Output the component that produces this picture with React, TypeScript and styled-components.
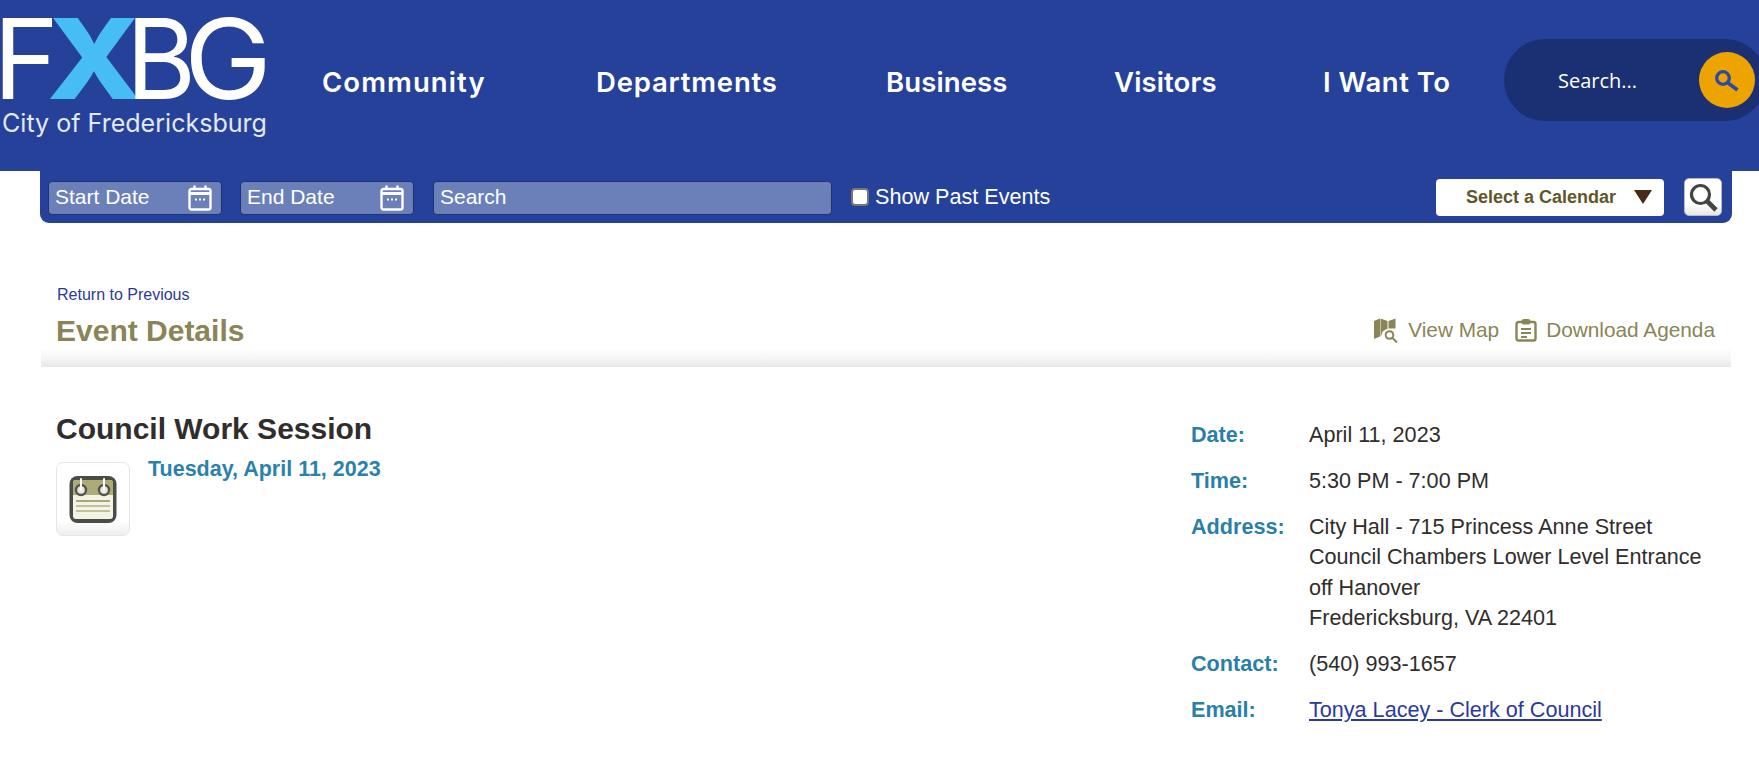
import React from "react";
import styled, { createGlobalStyle } from "styled-components";

const Global = createGlobalStyle`
  html, body { margin: 0; padding: 0; background: #fff; }
  body { font-family: "Liberation Sans", Arial, sans-serif; overflow: hidden; }
`;
const Page = styled.div`width: 1759px; height: 765px; overflow: hidden; background: #fff;`;
const Header = styled.header`
  height: 171px; background: #25419a; display: flex; align-items: flex-start; position: relative;
`;
const LogoWrap = styled.a`display: block; width: 270px; height: 140px; margin-top: 14px; flex: none;`;
const Nav = styled.nav`
  display: flex; align-items: center; height: 82px; margin-top: 41px; margin-left: 52px; width: 1129px;
`;
const NavItem = styled.a<{ $w: number; $ls: number }>`
  width: ${p => p.$w}px; flex: none; color: #fff; font-family: Inter, "Open Sans", sans-serif;
  font-weight: 600; font-size: 27.5px; letter-spacing: ${p => p.$ls}px; white-space: nowrap;
`;
const SearchPill = styled.div`
  position: absolute; left: 1504px; top: 39px; width: 262px; height: 82px; border-radius: 41px;
  background: #1b3072; display: flex; align-items: center;
`;
const PillText = styled.span`
  margin-left: 54px; color: #fff; font: 400 20px "Open Sans", sans-serif; width: 141px;
`;
const PillButton = styled.span`
  width: 56px; height: 56px; border-radius: 50%; background: #eea400; display: flex; align-items: center; justify-content: center;
`;
const FilterBar = styled.div`
  margin: 0 27px 0 40px; height: 52px; background: #25419a; border-radius: 0 0 9px 9px;
  display: flex; align-items: center; padding: 0 10px 0 8px; box-sizing: border-box;
`;
const Field = styled.div<{ $w: number; $gap: number }>`
  width: ${p => p.$w}px; margin-right: ${p => p.$gap}px; height: 34px; box-sizing: border-box;
  background: #6b7fb9; border: 1px solid #1d3378; border-radius: 4px; color: #fff; font-size: 21px;
  display: flex; align-items: center; justify-content: space-between; padding: 0 9px 2px 6px; margin-top: 1px;
`;
const FieldIcon = styled.svg`margin-top: 2px; flex: none;`;
const Check = styled.span`
  width: 18px; height: 18px; background: #fff; border: 2px solid #767676; border-radius: 4px; box-sizing: border-box; margin: 0 6px 0 0; flex: none;
`;
const CheckLabel = styled.span`color: #fff; font-size: 21.6px; flex: 1;`;
const Select = styled.div`
  width: 228px; height: 37px; background: #fff; border-radius: 4px; color: #5f5729; font-weight: 700; font-size: 18px;
  display: flex; align-items: center; padding-left: 30px; box-sizing: border-box;
`;
const Arrow = styled.span`
  margin-left: 18px; width: 0; height: 0; border-left: 9px solid transparent; border-right: 9px solid transparent; border-top: 14px solid #472a17;
`;
const SearchBtn = styled.div`
  width: 38px; height: 38px; margin: 0 0 0 20px; background: linear-gradient(#fff 70%, #e6e6e6); border: 1px solid #bbb; border-radius: 5px; box-sizing: border-box;
  display: flex; align-items: center; justify-content: center;
`;
const TitleBand = styled.div`
  margin: 54px 28px 0 41px; height: 90px; padding: 0 16px 0 15px; box-sizing: border-box;
  background: linear-gradient(#fff 71px, #f6f6f6 81px, #e7e7e7 90px);
`;
const BackLink = styled.a`display: block; color: #2a3a9c; font-size: 16px; line-height: 20px; padding: 8px 0 0 1px;`;
const TitleRow = styled.div`display: flex; align-items: center; justify-content: space-between; margin-top: 6px;`;
const PageTitle = styled.h1`margin: 0; color: #8a8556; font-size: 30px; line-height: 40px; font-weight: 700;`;
const Actions = styled.div`display: flex; align-items: center; gap: 16px; color: #8a8556; font-size: 20.8px; margin-top: -2px;`;
const Action = styled.a`display: flex; align-items: center; gap: 9px;`;
const Content = styled.main`
  display: flex; justify-content: space-between; padding: 42px 28px 0 56px;
`;
const Left = styled.div`width: 900px;`;
const EventTitle = styled.h2`margin: 0; color: #302d2c; font-size: 30px; line-height: 40px; font-weight: 700;`;
const EventRow = styled.div`display: flex; gap: 18px; margin-top: 8px;`;
const IconBox = styled.div`
  width: 74px; height: 74px; margin-top: 5px; box-sizing: border-box; border: 1px solid #e6e6e6; border-radius: 7px;
  background: linear-gradient(#fff 80%, #eee); display: flex; align-items: center; justify-content: center;
`;
const DateLine = styled.div`color: #2a82ac; font-size: 21.5px; font-weight: 700; line-height: 24px;`;
const Details = styled.dl`
  margin: 0; width: 540px; display: grid; grid-template-columns: 118px 1fr; row-gap: 15.5px; align-content: start;
  font-size: 21.6px; line-height: 30.4px; color: #302d2c; padding-top: 11px;
`;
const Term = styled.dt`font-weight: 700; color: #2a7fa8;`;
const Def = styled.dd`margin: 0;`;
const Mail = styled.a`color: #2a3a9c; text-decoration: underline;`;

const CalIcon = () => (
  <FieldIcon width="24" height="26" viewBox="0 0 24 26" fill="none" stroke="#fff" strokeWidth="2.4">
    <rect x="1.5" y="4" width="21" height="20.5" rx="2" />
    <path d="M1.5 8.5h21" strokeWidth="3" />
    <path d="M6.5 0.5v4M17.5 0.5v4" />
    <path d="M7 14.5h2M11 14.5h2M15 14.5h2" strokeWidth="2" />
  </FieldIcon>
);

export default function App() {
  return (
    <Page>
      <Global />
      <Header>
        <LogoWrap>
          <svg width="270" height="140" viewBox="0 0 270 140">
            <text x="-7" y="85" fill="#fff" fontFamily="Inter, sans-serif" fontWeight="400" fontSize="111" textLength="66" lengthAdjust="spacingAndGlyphs">F</text>
            <text x="47" y="85" fill="#47bdf5" fontFamily="Inter, sans-serif" fontWeight="800" fontSize="111" textLength="94" lengthAdjust="spacingAndGlyphs">X</text>
            <text x="126" y="85" fill="#fff" fontFamily="Inter, sans-serif" fontWeight="400" fontSize="111" textLength="70" lengthAdjust="spacingAndGlyphs">B</text>
            <text x="184" y="85" fill="#fff" fontFamily="Inter, sans-serif" fontWeight="400" fontSize="111" textLength="88" lengthAdjust="spacingAndGlyphs">G</text>
            <text x="2" y="118" fill="#e4e8f3" fontFamily="Inter, sans-serif" fontWeight="400" fontSize="25" textLength="265" lengthAdjust="spacingAndGlyphs">City of Fredericksburg</text>
          </svg>
        </LogoWrap>
        <Nav>
          <NavItem $w={274} $ls={1.1}>Community</NavItem>
          <NavItem $w={290} $ls={0.8}>Departments</NavItem>
          <NavItem $w={228} $ls={0.12}>Business</NavItem>
          <NavItem $w={209} $ls={0.12}>Visitors</NavItem>
          <NavItem $w={130} $ls={0.5}>I Want To</NavItem>
        </Nav>
        <SearchPill>
          <PillText>Search...</PillText>
          <PillButton>
            <svg width="28" height="28" viewBox="0 0 28 28" fill="none" stroke="#2b4aa0">
              <circle cx="10" cy="12" r="6.300" strokeWidth="3.300" />
              <path d="M15 17l9.500 7" strokeWidth="3.600" />
            </svg>
          </PillButton>
        </SearchPill>
      </Header>
      <FilterBar>
        <Field $w={174} $gap={18}>Start Date<CalIcon /></Field>
        <Field $w={174} $gap={19}>End Date<CalIcon /></Field>
        <Field $w={399} $gap={19}>Search</Field>
        <Check />
        <CheckLabel>Show Past Events</CheckLabel>
        <Select>Select a Calendar<Arrow /></Select>
        <SearchBtn>
          <svg width="32" height="32" viewBox="0 0 32 32" fill="none" stroke="#444">
            <circle cx="13.5" cy="13.5" r="9" strokeWidth="3.2" />
            <path d="M20 20l9 9" strokeWidth="4.6" />
          </svg>
        </SearchBtn>
      </FilterBar>
      <TitleBand>
        <BackLink>Return to Previous</BackLink>
        <TitleRow>
          <PageTitle>Event Details</PageTitle>
          <Actions>
            <Action>
              <svg width="25" height="25" viewBox="0 0 25 25" fill="#8a8556">
                <path d="M0 3l6-2.500v18L0 21z" />
                <path d="M6.500 0.500l7 2.500v8Q8 12 7.500 17l-1 1.500z" />
                <path d="M14.500 3L21.500 0.500v10h-7z" />
                <circle cx="15.500" cy="17" r="3.800" fill="none" stroke="#8a8556" strokeWidth="2" />
                <path d="M18.500 20l4.500 4.500" stroke="#8a8556" strokeWidth="2" />
              </svg>
              View Map
            </Action>
            <Action>
              <svg width="22" height="24" viewBox="0 0 22 24" fill="none" stroke="#8a8556" strokeWidth="2.4">
                <rect x="1.5" y="4" width="19" height="18.5" rx="2" />
                <rect x="7" y="1.500" width="8" height="4.500" rx="1.500" fill="#8a8556" strokeWidth="1" />
                <path d="M6 11h10M6 15h10" strokeWidth="2" />
                <path d="M6 19h6" strokeWidth="2" />
              </svg>
              Download Agenda
            </Action>
          </Actions>
        </TitleRow>
      </TitleBand>
      <Content>
        <Left>
          <EventTitle>Council Work Session</EventTitle>
          <EventRow>
            <IconBox>
              <svg width="50" height="50" viewBox="0 0 50 50">
                <rect x="1.500" y="2" width="47" height="47" rx="8" fill="#4b4b48" />
                <rect x="5" y="6" width="40" height="39" rx="3" fill="#f4f4e6" />
                <path d="M5 9a3 3 0 0 1 3-3h34a3 3 0 0 1 3 3v12H5z" fill="#adac76" />
                <path d="M8 27h34" stroke="#a8a878" strokeWidth="2" />
                <path d="M8 32h34M8 37h34" stroke="#c0c09c" strokeWidth="2" />
                <circle cx="13" cy="16" r="5" fill="#e9e9dc" stroke="#555552" strokeWidth="2.400" />
                <circle cx="36" cy="16" r="5" fill="#e9e9dc" stroke="#555552" strokeWidth="2.400" />
                <path d="M13 5v11M36 5v11" stroke="#fff" strokeWidth="2" strokeLinecap="round" />
              </svg>
            </IconBox>
            <DateLine>Tuesday, April 11, 2023</DateLine>
          </EventRow>
        </Left>
        <Details>
          <Term>Date:</Term><Def>April 11, 2023</Def>
          <Term>Time:</Term><Def>5:30 PM - 7:00 PM</Def>
          <Term>Address:</Term>
          <Def>City Hall - 715 Princess Anne Street<br />Council Chambers Lower Level Entrance<br />off Hanover<br />Fredericksburg, VA 22401</Def>
          <Term>Contact:</Term><Def>(540) 993-1657</Def>
          <Term>Email:</Term><Def><Mail>Tonya Lacey - Clerk of Council</Mail></Def>
        </Details>
      </Content>
    </Page>
  );
}
